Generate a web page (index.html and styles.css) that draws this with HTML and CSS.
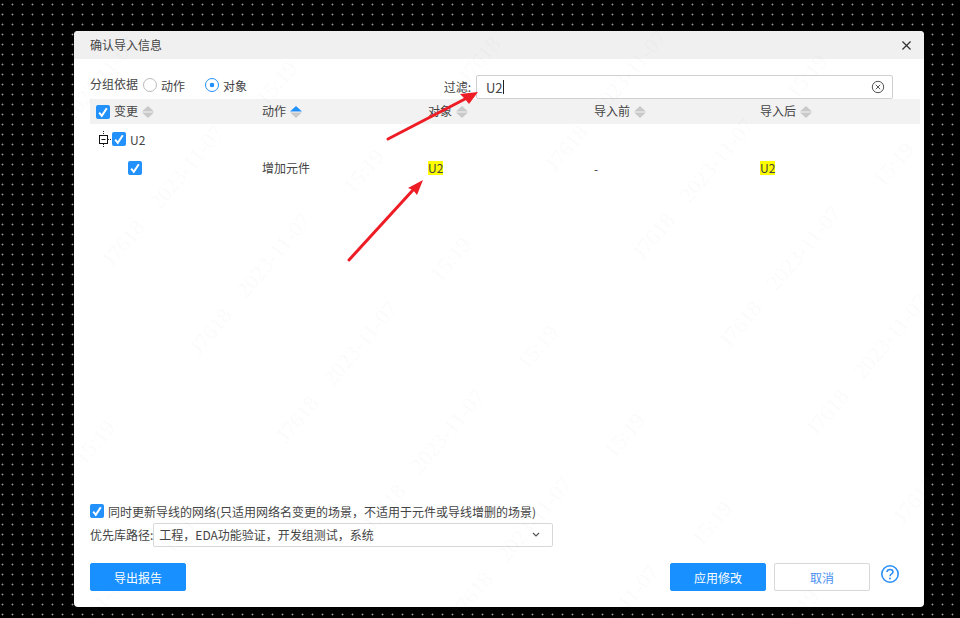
FILE: index.html

```html
<!DOCTYPE html>
<html lang="zh-CN">
<head>
    <meta charset="UTF-8">
    <meta name="viewport" content="width=device-width, initial-scale=1.0">
    <title>确认导入信息</title>
    <link rel="stylesheet" href="styles.css">
</head>
<body>
    <svg class="defs" width="0" height="0">
        <symbol id="check" viewBox="0 0 14 14">
            <rect width="14" height="14" rx="2" fill="#2391fb"/>
            <path d="M3.2 7.6 L5.8 10.8 L10.8 3.2" fill="none" stroke="#fff" stroke-width="2"/>
        </symbol>
        <symbol id="sort" viewBox="0 0 12 12">
            <path d="M6 0 L12 5.5 L0 5.5 Z" fill="#c9c9c9"/>
            <path d="M6 12 L12 6.5 L0 6.5 Z" fill="#c9c9c9"/>
        </symbol>
        <symbol id="sort-up" viewBox="0 0 12 12">
            <path d="M6 0 L12 5.5 L0 5.5 Z" fill="#2391fb"/>
            <path d="M6 12 L12 6.5 L0 6.5 Z" fill="#c9c9c9"/>
        </symbol>
    </svg>

    <div class="dialog">
        <div class="dialog-title">
            <span class="lift">确认导入信息</span>
            <svg class="close" width="9" height="9" viewBox="0 0 10 10">
                <path d="M0.5 0.5 L9.5 9.5 M9.5 0.5 L0.5 9.5" stroke="#333" stroke-width="1.4" fill="none"/>
            </svg>
        </div>

        <div class="dialog-body">
            <div class="toolbar">
                <div class="group-by">
                    <span class="lift">分组依据</span>
                    <label class="radio"><i class="dot"></i>动作</label>
                    <label class="radio radio-on"><i class="dot"></i>对象</label>
                </div>
                <div class="filter">
                    <span class="filter-label lift">过滤:</span>
                    <div class="filter-box">
                        <span>U2</span><i class="caret"></i>
                        <svg class="clear" width="14" height="14" viewBox="0 0 14 14">
                            <circle cx="7" cy="7" r="5.7" fill="none" stroke="#555" stroke-width="1"/>
                            <path d="M4.8 4.8 L9.2 9.2 M9.2 4.8 L4.8 9.2" stroke="#555" stroke-width="1" fill="none"/>
                        </svg>
                    </div>
                </div>
            </div>

            <div class="table">
                <div class="row head">
                    <div class="cell first">
                        <svg class="cb"><use href="#check"/></svg><span class="lift">变更</span><svg class="sort"><use href="#sort"/></svg>
                    </div>
                    <div class="cell"><span class="lift">动作</span><svg class="sort"><use href="#sort-up"/></svg></div>
                    <div class="cell"><span class="lift">对象</span><svg class="sort"><use href="#sort"/></svg></div>
                    <div class="cell"><span class="lift">导入前</span><svg class="sort"><use href="#sort"/></svg></div>
                    <div class="cell"><span class="lift">导入后</span><svg class="sort"><use href="#sort"/></svg></div>
                </div>
                <div class="row tree-row">
                    <div class="cell tree-cell">
                        <svg class="twist" width="13" height="17" viewBox="0 0 13 17">
                            <path d="M5.5 0 V4 M5.5 13 V17 M10 8.5 H13" stroke="#222" stroke-dasharray="1 1" fill="none"/>
                            <rect x="1.5" y="4.5" width="8" height="8" fill="#fff" stroke="#111"/>
                            <path d="M3.5 8.5 H7.5" stroke="#111" fill="none"/>
                        </svg>
                        <svg class="cb"><use href="#check"/></svg>U2
                    </div>
                </div>
                <div class="row item-row">
                    <div class="cell item-cell"><svg class="cb"><use href="#check"/></svg></div>
                    <div class="cell"><span class="lift">增加元件</span></div>
                    <div class="cell"><mark>U2</mark></div>
                    <div class="cell">-</div>
                    <div class="cell"><mark>U2</mark></div>
                </div>
            </div>

            <div class="options">
                <div class="sync-line">
                    <svg class="cb"><use href="#check"/></svg>同时更新导线的网络(只适用网络名变更的场景，不适用于元件或导线增删的场景)
                </div>
                <div class="lib-line">
                    <span class="lift">优先库路径:</span>
                    <div class="select">
                        <span class="lift">工程，EDA功能验证，开发组测试，系统</span>
                        <svg width="8" height="6" viewBox="0 0 8 6">
                            <path d="M1 1 L4 4 L7 1" fill="none" stroke="#555" stroke-width="1.2"/>
                        </svg>
                    </div>
                </div>
            </div>

            <div class="footer">
                <button class="btn btn-primary">导出报告</button>
                <div class="footer-right">
                    <button class="btn btn-primary">应用修改</button>
                    <button class="btn btn-plain">取消</button>
                    <svg class="help" width="20" height="20" viewBox="0 0 20 20">
                        <circle cx="10" cy="10" r="8.2" fill="none" stroke="#2b8ff7" stroke-width="1.6"/>
                        <path d="M7 8 C7 4.6 13 4.6 13 8 C13 10 10 9.8 10 12.2" fill="none" stroke="#2b8ff7" stroke-width="1.6"/>
                        <circle cx="10" cy="14.6" r="1" fill="#2b8ff7"/>
                    </svg>
                </div>
            </div>
        </div>
    </div>

    <!-- annotation arrows drawn on top of the shot -->
    <svg class="arrows" width="960" height="618" viewBox="0 0 960 618">
        <path d="M388 139 L465 99" stroke="#ee1c25" stroke-width="3" stroke-linecap="round" fill="none"/>
        <path d="M478 92 L460 94 L465 99 L469 104 Z" fill="#ee1c25"/>
        <path d="M349 260 L413 190" stroke="#ee1c25" stroke-width="3" stroke-linecap="round" fill="none"/>
        <path d="M423 180 L408 188 L413 190 L417 195 Z" fill="#ee1c25"/>
    </svg>

    <!-- watermark, one triple repeated on a slanted lattice -->
    <svg class="watermark" width="960" height="618" viewBox="0 0 960 618">
        <defs>
            <g id="wm">
                <text transform="rotate(-50)" text-anchor="middle">J7618</text>
                <text transform="translate(150 12) rotate(-50)" text-anchor="middle">2023-11-07</text>
                <text transform="translate(240 -72) rotate(-50)" text-anchor="middle">15:19</text>
            </g>
        </defs>
        <use href="#wm" x="-227" y="431"/>
        <use href="#wm" x="-140" y="519"/>
        <use href="#wm" x="-53" y="607"/>
        <use href="#wm" x="-132" y="-16"/>
        <use href="#wm" x="-45" y="72"/>
        <use href="#wm" x="42" y="160"/>
        <use href="#wm" x="129" y="248"/>
        <use href="#wm" x="216" y="336"/>
        <use href="#wm" x="303" y="424"/>
        <use href="#wm" x="390" y="512"/>
        <use href="#wm" x="477" y="600"/>
        <use href="#wm" x="564" y="688"/>
        <use href="#wm" x="398" y="-23"/>
        <use href="#wm" x="485" y="65"/>
        <use href="#wm" x="572" y="153"/>
        <use href="#wm" x="659" y="241"/>
        <use href="#wm" x="746" y="329"/>
        <use href="#wm" x="833" y="417"/>
        <use href="#wm" x="920" y="505"/>
        <use href="#wm" x="1007" y="593"/>
    </svg>
</body>
</html>
```

FILE: styles.css

```css
body {
    margin: 0;
    width: 960px;
    height: 618px;
    overflow: hidden;
    position: relative;
    background-color: #000;
    background-image: radial-gradient(circle at 2.5px 4.5px, #999 0.7px, transparent 1.2px);
    background-size: 10px 10px;
    font-family: "Noto Sans CJK SC", "Noto Sans", sans-serif;
    font-size: 12px;
    color: #444;
}

.defs {
    position: absolute;
}

/* the reference text sits a pixel higher than Noto centres it */
.lift {
    margin-top: -2px;
}

.dialog {
    position: relative;
    top: 31px;
    left: 74px;
    width: 850px;
    height: 576px;
    background: #fff;
    border-radius: 4px;
    display: flex;
    flex-direction: column;
}

.dialog-title {
    height: 28px;
    flex: none;
    padding: 0 13px 0 16px;
    display: flex;
    align-items: center;
    justify-content: space-between;
    background: #f0f0f0;
    border-radius: 4px 4px 0 0;
}

.dialog-body {
    flex: 1;
    display: flex;
    flex-direction: column;
    padding: 16px 4px 16px 16px;
}

.toolbar {
    display: flex;
    height: 24px;
    padding-right: 27px;
    justify-content: space-between;
}

.group-by {
    display: flex;
    align-items: center;
    height: 18px;
}

.radio {
    display: flex;
    align-items: center;
    margin-left: 5px;
    margin-right: 15px;
    padding-top: 2px;
}

.dot {
    width: 12px;
    height: 12px;
    margin-right: 4px;
    border: 1px solid #bbb;
    border-radius: 50%;
}

.radio-on .dot {
    border-color: #2391fb;
    background: radial-gradient(circle, #2391fb 2px, #fff 2.6px);
}

.filter {
    display: flex;
    align-items: center;
}

.filter-label {
    margin-right: 5px;
}

.filter-box {
    width: 399px;
    height: 22px;
    padding: 0 7px 0 9px;
    border: 1px solid #d0d0d0;
    border-radius: 2px;
    background: #fff;
    display: flex;
    align-items: center;
    font-size: 13px;
}

.caret {
    width: 1px;
    height: 14px;
    background: #222;
}

.clear {
    margin-left: auto;
}

.table {
    flex: 1;
}

.row {
    display: grid;
    grid-template-columns: repeat(5, 166px);
    align-items: center;
}

.cell {
    padding-left: 6px;
    display: flex;
    align-items: center;
}

.head {
    height: 25px;
    background: #f2f2f2;
}

.tree-row {
    height: 30px;
}

.item-row {
    height: 28px;
}

.cb {
    width: 14px;
    height: 14px;
    flex: none;
}

.head .cb {
    margin-right: 4px;
}

.sort {
    width: 12px;
    height: 12px;
    margin-left: 4px;
    flex: none;
}

.tree-cell {
    grid-column: 1 / 6;
    padding-left: 8px;
}

.tree-cell .cb {
    margin: 0 4px 0 1px;
}

.item-cell {
    padding-left: 38px;
}

mark {
    background: #ffff00;
    color: #444;
    line-height: 14px;
}

.options {
    display: flex;
    flex-direction: column;
}

.sync-line {
    display: flex;
    align-items: center;
    height: 20px;
}

.sync-line .cb {
    margin-right: 4px;
}

.lib-line {
    display: flex;
    align-items: center;
    height: 24px;
    margin-top: 2px;
}

.select {
    width: 381px;
    height: 22px;
    border: 1px solid #d8d8d8;
    border-radius: 2px;
    padding: 0 12px 0 5px;
    display: flex;
    align-items: center;
    justify-content: space-between;
}

.footer {
    display: flex;
    justify-content: space-between;
    margin-top: 16px;
    padding-right: 20px;
}

.footer-right {
    display: flex;
    align-items: flex-start;
    gap: 8px;
}

.btn {
    width: 96px;
    height: 28px;
    border-radius: 2px;
    border: 1px solid #1890ff;
    font-family: inherit;
    font-size: 12px;
    padding: 0;
}

.btn-primary {
    background: #1890ff;
    color: #fff;
}

.btn-plain {
    background: #fff;
    border-color: #d8d8d8;
    color: #4a90f0;
}

.help {
    margin: 1px 0 0 2px;
}

.arrows,
.watermark {
    position: absolute;
    top: 0;
    left: 0;
    pointer-events: none;
}

.watermark text {
    font-family: "Liberation Serif", serif;
    font-size: 22px;
    fill: rgba(128, 128, 128, 0.05);
}
```
